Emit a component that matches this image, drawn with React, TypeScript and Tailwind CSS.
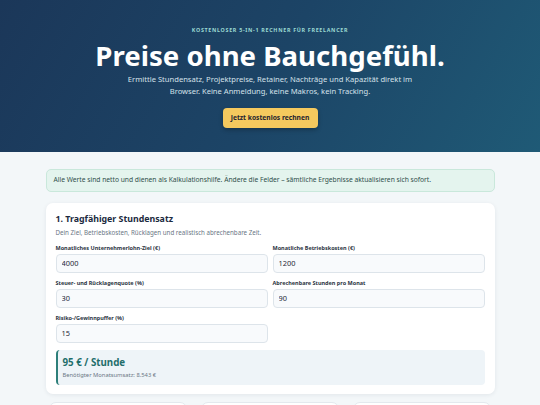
import React from "react";

const fields = [
  { label: "Monatliches Unternehmerlohn-Ziel (€)", value: "4000" },
  { label: "Monatliche Betriebskosten (€)", value: "1200" },
  { label: "Steuer- und Rücklagenquote (%)", value: "30" },
  { label: "Abrechenbare Stunden pro Monat", value: "90" },
  { label: "Risiko-/Gewinnpuffer (%)", value: "15" },
];

function Field({ label, value }: { label: string; value: string }) {
  return (
    <label className="flex flex-col">
      <span className="text-[5.5px] font-bold leading-[8px] text-[#2b3442]">{label}</span>
      <input
        readOnly
        value={value}
        className="mt-[2px] h-[19px] w-full rounded-[4px] border border-[#dde4ea] bg-[#f8fafc] px-[5px] text-[7.4px] text-[#1f2937] outline-none"
      />
    </label>
  );
}

export default function App() {
  return (
    <div
      className="min-h-screen bg-[#f3f7f9]"
      style={{ fontFamily: '"Noto Sans", "Open Sans", sans-serif' }}
    >
      <header className="h-[152px] bg-linear-120 from-[#1b3759] via-[#1c4466] to-[#1f5a76] pt-[27px] text-center">
        <p className="text-[5.35px] font-bold uppercase leading-[7px] tracking-[0.13em] text-[#9ad9d2]">
          Kostenloser 5-in-1 Rechner für Freelancer
        </p>
        <h1 className="mt-[5px] text-[27.6px] font-bold leading-[32px] text-white">
          Preise ohne Bauchgefühl.
        </h1>
        <p className="mx-auto mt-[3.25px] w-[310px] text-[7.6px] leading-[11.5px] text-[#d5e1ea]">
          Ermittle Stundensatz, Projektpreise, Retainer, Nachträge und Kapazität direkt im Browser.
          Keine Anmeldung, keine Makros, kein Tracking.
        </p>
        <button className="mt-[10.5px] h-[20.5px] w-[95px] rounded-[4px] bg-[#f5c95e] text-[6.7px] font-bold text-[#1f2430] shadow-[0_2px_4px_rgba(0,0,0,0.25)]">
          Jetzt kostenlos rechnen
        </button>
      </header>

      <main className="mx-auto w-[449px] pt-[17px]">
        <div className="flex h-[23px] items-center rounded-[5px] border border-[#c9e8db] bg-[#e4f4ee] px-[7px] text-[6.7px] text-[#2f4f4a]">
          Alle Werte sind netto und dienen als Kalkulationshilfe. Ändere die Felder – sämtliche Ergebnisse aktualisieren sich sofort.
        </div>

        <section className="mt-[11px] rounded-[7px] bg-white px-[10px] pb-[9px] pt-[10px] shadow-[0_1px_4px_rgba(20,40,60,0.08)]">
          <h2 className="text-[8.8px] font-bold leading-[12px] text-[#1b2a3e]">1. Tragfähiger Stundensatz</h2>
          <p className="mt-[3px] text-[6.2px] leading-[9px] text-[#6b7785]">
            Dein Ziel, Betriebskosten, Rücklagen und realistisch abrechenbare Zeit.
          </p>
          <div className="mt-[6.5px] grid grid-cols-2 gap-x-[5px] gap-y-[6px]">
            {fields.map((f) => (
              <Field key={f.label} label={f.label} value={f.value} />
            ))}
          </div>
          <div className="mt-[7px] rounded-[4px] border-l-2 border-[#2d7f7a] bg-[#eef4f8] pb-[6px] pl-[5px] pr-[7px] pt-[6px]">
            <div className="text-[9.75px] font-bold leading-[13px] text-[#1f6e6b]">95 € / Stunde</div>
            <div className="mt-[2px] text-[5.8px] leading-[8px] text-[#6b7785]">Benötigter Monatsumsatz: 8.543 €</div>
          </div>
        </section>

        <div className="mt-[8px] grid grid-cols-3 gap-[14px] px-[3px]">
          <div className="h-[60px] rounded-[7px] border border-[#e3e9ee] bg-white" />
          <div className="h-[60px] rounded-[7px] border border-[#e3e9ee] bg-white" />
          <div className="h-[60px] rounded-[7px] border border-[#e3e9ee] bg-white" />
        </div>
      </main>
    </div>
  );
}
